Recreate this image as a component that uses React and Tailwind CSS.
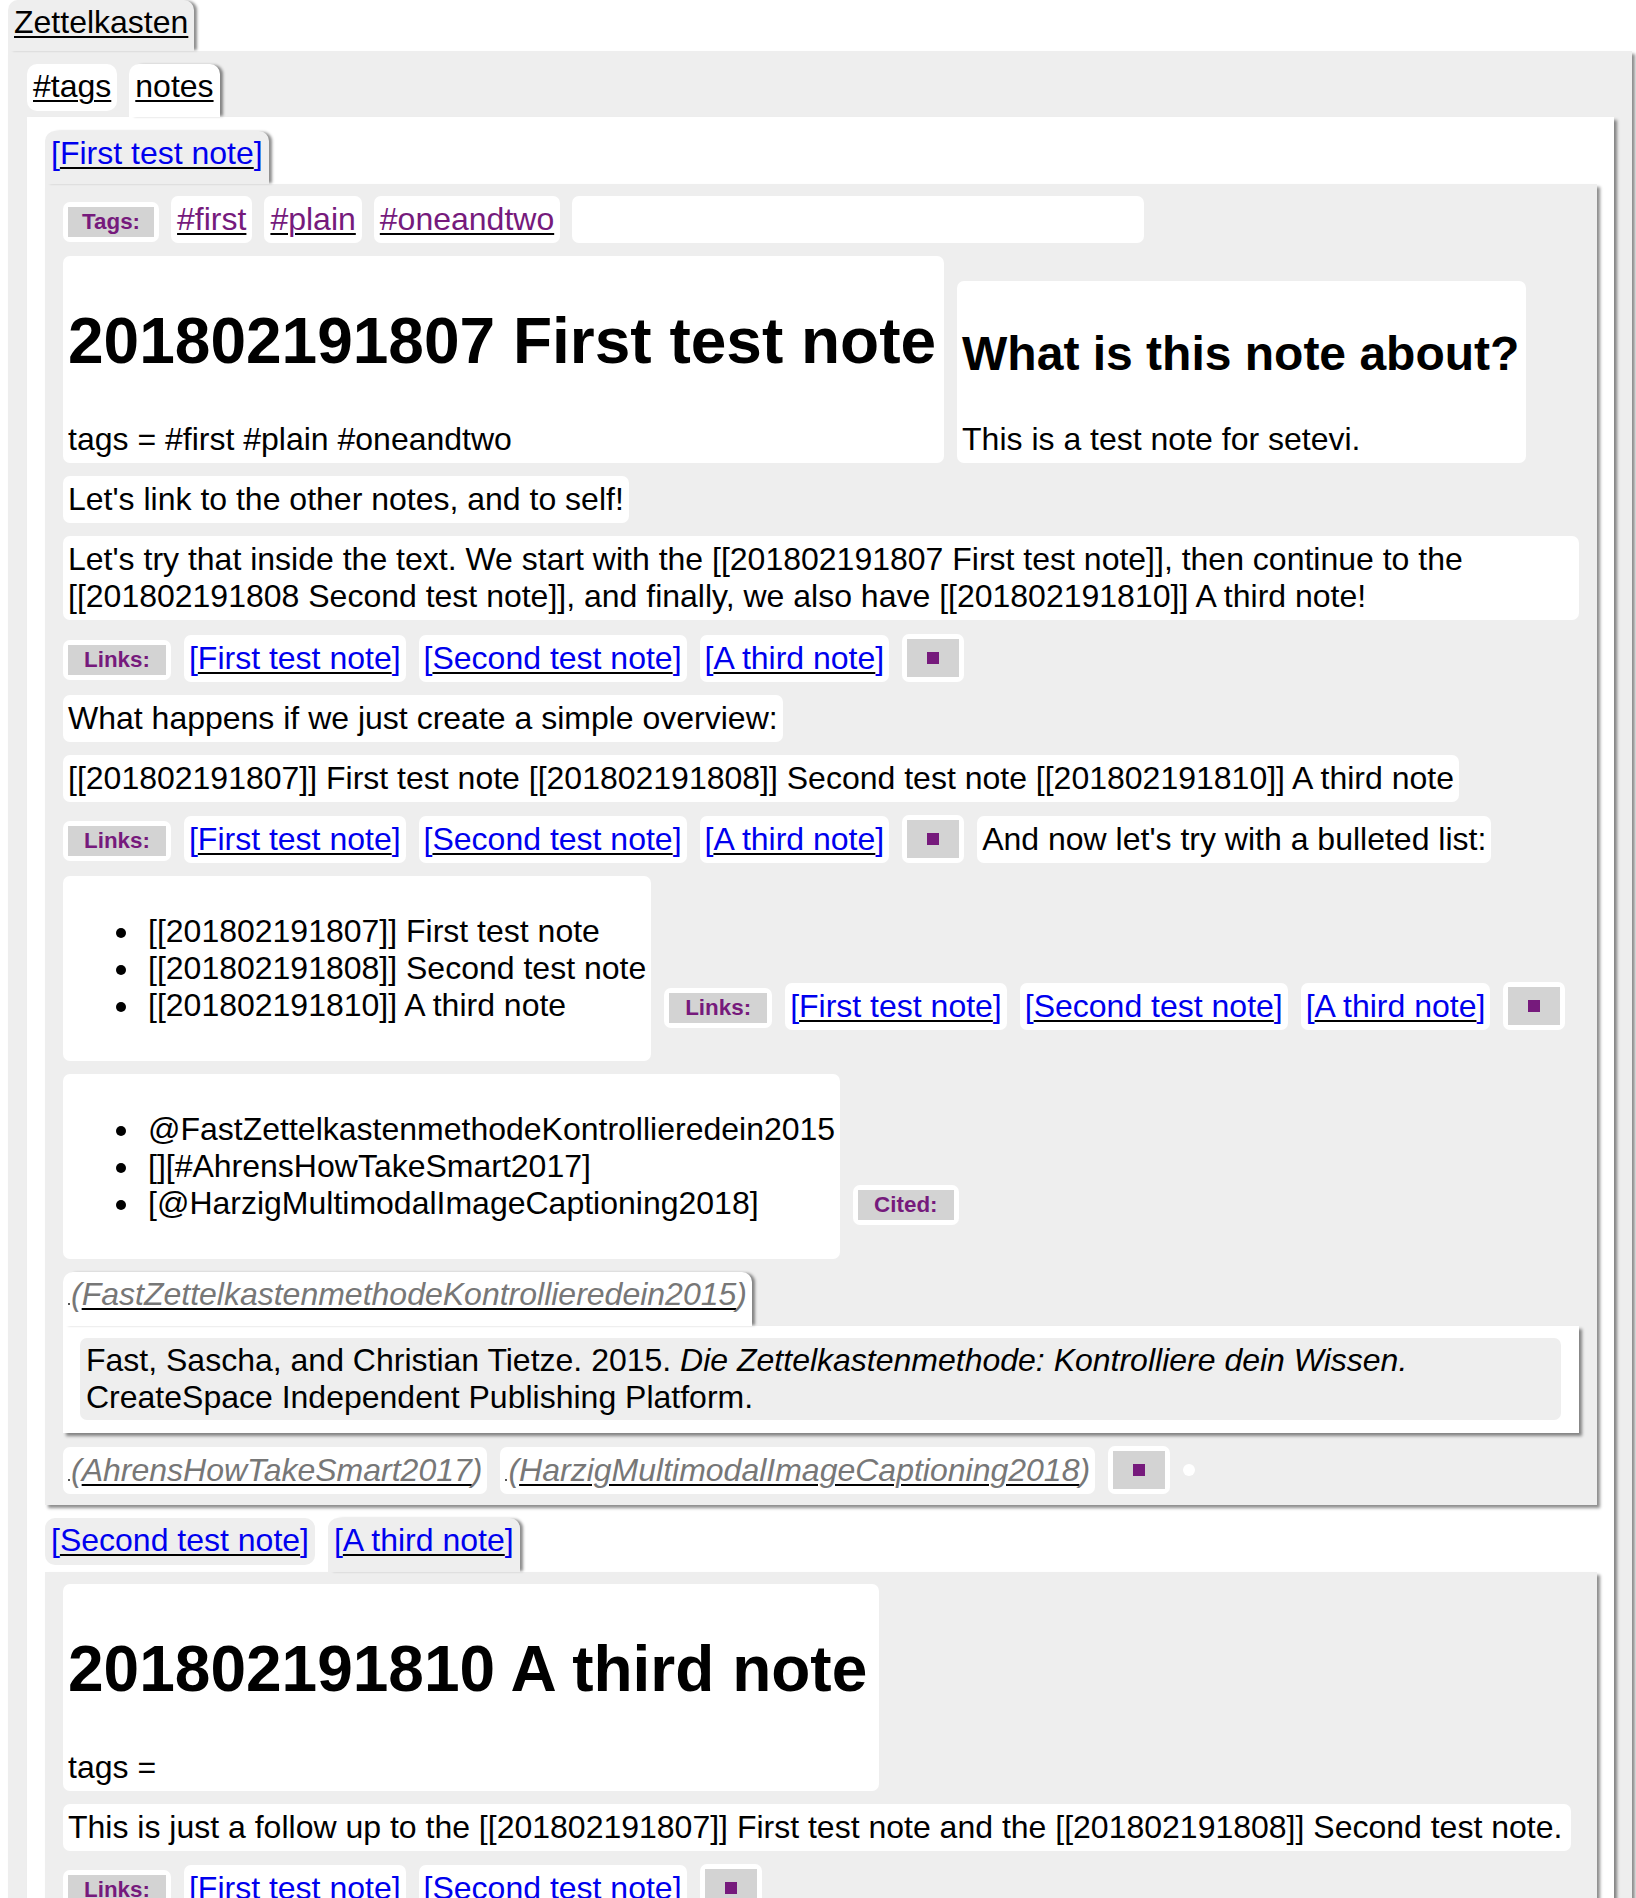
import React from 'react';

function U({ children }) {
  return (
    <span className="underline decoration-black decoration-2 underline-offset-[3px]">{children}</span>
  );
}

function NoteLink({ children }) {
  return (
    <span className="text-[#0000ee]">
      [<U>{children}</U>]
    </span>
  );
}

function CiteLink({ children }) {
  return (
    <span className="italic text-[#777]">
      <span className="inline-block w-[2px] h-[2px] bg-[#555] mr-[1px] align-baseline" />
      (<U>{children}</U>)
    </span>
  );
}

function Box({ children, className = '' }) {
  return (
    <div className={`bg-white rounded-[7px] px-[5px] py-[5px] leading-[37px] ${className}`}>{children}</div>
  );
}

function Label({ children, className = '', pad = 'px-[16px]' }) {
  return (
    <div className={`bg-white rounded-[7px] p-[5px] ${className}`}>
      <div className={`bg-[#d3d3d3] ${pad} py-[2px] text-[22.4px] leading-[26px] font-bold text-[#761a7c]`}>
        {children}
      </div>
    </div>
  );
}

function Stop() {
  return (
    <div className="bg-white rounded-[7px] p-[5px]">
      <div className="bg-[#d3d3d3] w-[52px] h-[38px] flex items-center justify-center">
        <div className="w-[12px] h-[12px] bg-[#761a7c]" />
      </div>
    </div>
  );
}

function LinksRow({ links, className = '' }) {
  return (
    <div className={`flex items-center gap-[13px] ${className}`}>
      <Label className="mt-[4px]">Links:</Label>
      {links.map((l) => (
        <Box key={l}>
          <NoteLink>{l}</NoteLink>
        </Box>
      ))}
      <Stop />
    </div>
  );
}

const allLinks = ['First test note', 'Second test note', 'A third note'];

export default function App() {
  return (
    <div className="min-h-screen bg-white text-black text-[32px] leading-[37px] font-['Liberation_Sans',Arial,Helvetica,sans-serif]">
      {/* Top tab */}
      <div className="flex">
        <div className="ml-[8px] h-[51px] px-[6px] pt-[4px] bg-[#eee] rounded-t-[10px] shadow-[4px_0_3px_-1px_rgba(0,0,0,0.45)]">
          <U>Zettelkasten</U>
        </div>
      </div>

      {/* Outer panel */}
      <div className="ml-[8px] mr-[4px] bg-[#eee] pl-[19px] pr-[18px] pt-[13px] pb-[40px] shadow-[3px_3px_3px_rgba(0,0,0,0.45)]">
        <div className="flex items-start gap-[12px]">
          <div className="bg-white rounded-[10px] px-[6px] pt-[4px] pb-[6px]">
            <U>#tags</U>
          </div>
          <div className="bg-white rounded-t-[10px] px-[6px] pt-[4px] pb-[12px] shadow-[4px_0_3px_-1px_rgba(0,0,0,0.45)]">
            <U>notes</U>
          </div>
        </div>

        {/* White panel */}
        <div className="bg-white pl-[18px] pr-[17px] pt-[14px] pb-[40px] shadow-[3px_3px_3px_rgba(0,0,0,0.45)]">
          <div className="flex items-start">
            <div className="bg-[#eee] rounded-t-[10px] px-[6px] pt-[4px] pb-[12px] shadow-[4px_0_3px_-1px_rgba(0,0,0,0.45)]">
              <NoteLink>First test note</NoteLink>
            </div>
          </div>

          {/* First note */}
          <div className="bg-[#eee] px-[18px] pt-[12px] pb-[11px] flex flex-col items-start gap-[13px] shadow-[3px_3px_3px_rgba(0,0,0,0.45)]">
            <div className="flex items-center gap-[12px]">
              <Label className="mt-[4px]" pad="px-[14px]">Tags:</Label>
              {['#first', '#plain', '#oneandtwo'].map((t) => (
                <Box key={t} className="px-[6px] text-[#761a7c]">
                  <U>{t}</U>
                </Box>
              ))}
              <div className="bg-white rounded-[7px] w-[572px] h-[47px]" />
            </div>

            <div className="flex items-end gap-[13px]">
              <div className="bg-white rounded-[7px] p-[5px] pr-[8px]">
                <h1 className="text-[64px] leading-[74px] font-bold my-[43px]">201802191807 First test note</h1>
                <div className="leading-[37px]">tags = #first #plain #oneandtwo</div>
              </div>
              <div className="bg-white rounded-[7px] p-[5px] pr-[7px]">
                <h2 className="text-[48px] leading-[55px] font-bold my-[40px]">What is this note about?</h2>
                <div className="leading-[37px]">This is a test note for setevi.</div>
              </div>
            </div>

            <Box>Let's link to the other notes, and to self!</Box>

            <Box>
              Let's try that inside the text. We start with the [[201802191807 First test note]], then continue
              to the [[201802191808 Second test note]], and finally, we also have [[201802191810]] A third note!
            </Box>

            <LinksRow links={allLinks} className="mt-[1px]" />

            <Box>What happens if we just create a simple overview:</Box>

            <Box>
              [[201802191807]] First test note [[201802191808]] Second test note [[201802191810]] A third note
            </Box>

            <div className="flex items-center gap-[13px]">
              <LinksRow links={allLinks} />
              <Box>And now let's try with a bulleted list:</Box>
            </div>

            <div className="flex items-end gap-[13px]">
              <Box>
                <ul className="list-disc pl-[74px] my-[32px] [&>li]:pl-[6px]">
                  <li>[[201802191807]] First test note</li>
                  <li>[[201802191808]] Second test note</li>
                  <li>[[201802191810]] A third note</li>
                </ul>
              </Box>
              <LinksRow links={allLinks} className="mb-[31px]" />
            </div>

            <div className="flex items-end gap-[13px]">
              <Box>
                <ul className="list-disc pl-[74px] my-[32px] [&>li]:pl-[6px]">
                  <li>@FastZettelkastenmethodeKontrollieredein2015</li>
                  <li>[][#AhrensHowTakeSmart2017]</li>
                  <li>[@HarzigMultimodalImageCaptioning2018]</li>
                </ul>
              </Box>
              <Label className="mb-[34px]">Cited:</Label>
            </div>

            {/* Citation tab */}
            <div className="self-stretch">
              <div className="flex items-start">
                <div className="bg-white rounded-t-[10px] px-[5px] pt-[4px] pb-[13px] shadow-[4px_0_3px_-1px_rgba(0,0,0,0.45)]">
                  <CiteLink>FastZettelkastenmethodeKontrollieredein2015</CiteLink>
                </div>
              </div>
              <div className="bg-white pl-[17px] pr-[18px] pt-[12px] pb-[13px] shadow-[3px_3px_3px_rgba(0,0,0,0.45)]">
                <div className="bg-[#eee] rounded-[7px] px-[6px] py-[4px] leading-[37px]">
                  Fast, Sascha, and Christian Tietze. 2015. <i>Die Zettelkastenmethode: Kontrolliere dein Wissen.</i>{' '}
                  CreateSpace Independent Publishing Platform.
                </div>
              </div>
            </div>

            <div className="flex items-center gap-[13px]">
              <Box>
                <CiteLink>AhrensHowTakeSmart2017</CiteLink>
              </Box>
              <Box>
                <CiteLink>HarzigMultimodalImageCaptioning2018</CiteLink>
              </Box>
              <Stop />
              <div className="w-[12px] h-[12px] rounded-full bg-white" />
            </div>
          </div>

          {/* Second tabs */}
          <div className="mt-[13px] flex items-start gap-[13px]">
            <div className="bg-[#eee] rounded-[10px] px-[6px] pt-[4px] pb-[6px]">
              <NoteLink>Second test note</NoteLink>
            </div>
            <div className="bg-[#eee] rounded-t-[10px] px-[6px] pt-[4px] pb-[13px] shadow-[4px_0_3px_-1px_rgba(0,0,0,0.45)]">
              <NoteLink>A third note</NoteLink>
            </div>
          </div>

          {/* Third note */}
          <div className="bg-[#eee] px-[18px] pt-[12px] pb-[11px] flex flex-col items-start gap-[13px] shadow-[3px_3px_3px_rgba(0,0,0,0.45)]">
            <div className="bg-white rounded-[7px] p-[5px] pr-[12px]">
              <h1 className="text-[64px] leading-[74px] font-bold my-[43px]">201802191810 A third note</h1>
              <div className="leading-[37px]">tags =</div>
            </div>
            <Box className="pr-[9px]">
              This is just a follow up to the [[201802191807]] First test note and the [[201802191808]] Second test note.
            </Box>
            <LinksRow links={['First test note', 'Second test note']} />
          </div>
        </div>
      </div>
    </div>
  );
}
